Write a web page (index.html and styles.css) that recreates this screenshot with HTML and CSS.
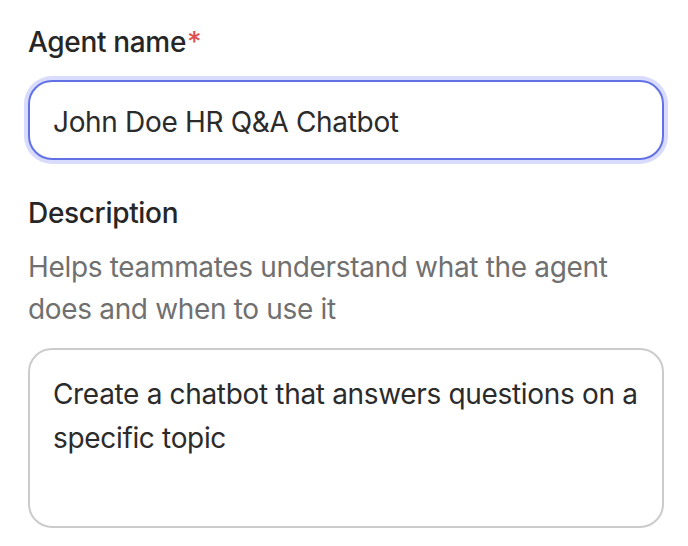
FILE: index.html
```html
<!DOCTYPE html>
<html lang="en">
<head>
<meta charset="utf-8">
<title>Agent form</title>
<link rel="stylesheet" href="styles.css">
</head>
<body>
<form class="form">
  <div class="field">
    <label class="label" for="agent-name">Agent name<span class="req">*</span></label>
    <input class="input" id="agent-name" type="text" value="John Doe HR Q&amp;A Chatbot">
  </div>
  <div class="field field-desc">
    <label class="label" for="agent-desc">Description</label>
    <p class="help">Helps teammates understand what the agent does and when to use it</p>
    <textarea class="textarea" id="agent-desc">Create a chatbot that answers questions on a specific topic</textarea>
  </div>
</form>
</body>
</html>
```
FILE: styles.css
```css
* { box-sizing: border-box; }
html, body { margin: 0; padding: 0; background: #ffffff; }
body {
  font-family: Inter, "Noto Sans", "Liberation Sans", sans-serif;
  color: #2b2b2b;
  letter-spacing: -0.33px;
}
.form {
  padding: 22px 24px 0 28px;
  display: flex;
  flex-direction: column;
}
.field { display: flex; flex-direction: column; }
.field-desc { margin-top: 33px; }
.label {
  font-size: 28px;
  line-height: 40px;
  font-weight: 500;
  color: #262626;
}
.req { color: #e0504d; margin-left: 1px; }
.input {
  margin-top: 18px;
  height: 80px;
  width: 636px;
  border: 2px solid #6272e6;
  border-radius: 24px;
  box-shadow: 0 0 0 4px #d8dbfb;
  padding: 3px 23px 0;
  font: inherit;
  font-size: 28px;
  letter-spacing: -0.33px;
  color: #2b2b2b;
  outline: none;
  background: #fff;
}
.help {
  margin: 13px 0 0;
  font-size: 28px;
  line-height: 42px;
  color: #707070;
}
.textarea {
  margin-top: 18px;
  width: 636px;
  height: 180px;
  border: 2px solid #cbcbcb;
  border-radius: 24px;
  padding: 22px 12px 22px 23px;
  font: inherit;
  font-size: 28px;
  line-height: 44px;
  letter-spacing: -0.33px;
  color: #2b2b2b;
  resize: none;
  outline: none;
  overflow: hidden;
  background: #fff;
}
```
